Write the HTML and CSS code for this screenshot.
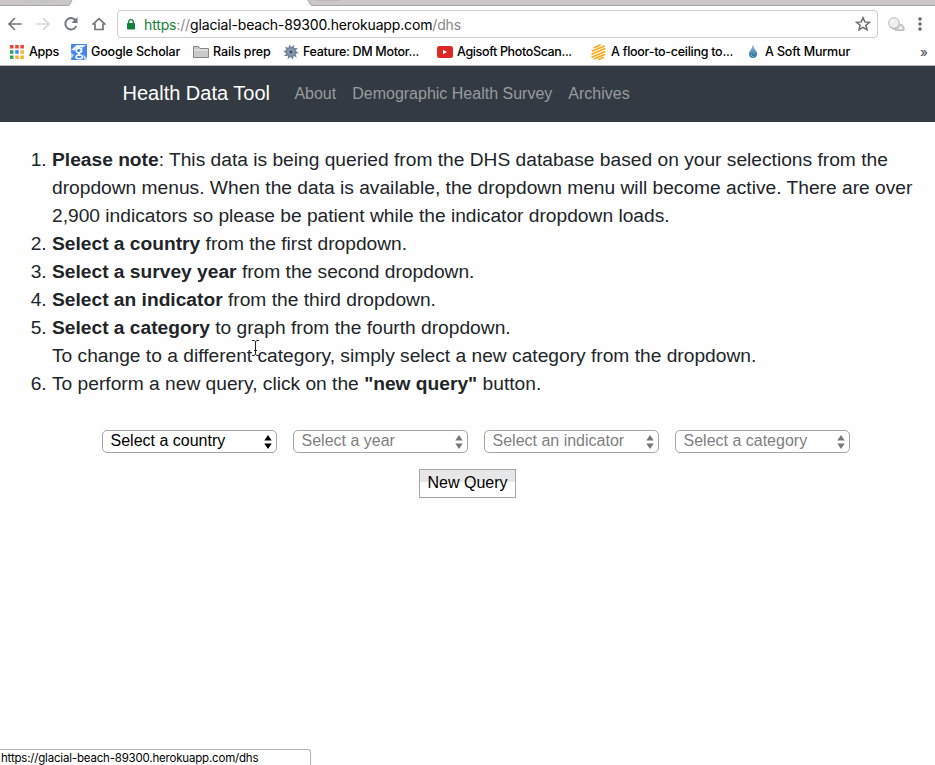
FILE: index.html
```html
<!DOCTYPE html>
<html lang="en">
<head>
<meta charset="utf-8">
<title>Health Data Tool</title>
<link rel="stylesheet" href="styles.css">
</head>
<body>
<header class="chrome">
  <svg class="tabs" width="935" height="6" viewBox="0 0 935 6">
    <path d="M0 0H72L70 4.500Q69.500 5.500 68 5.500H0Z" fill="#cbc7c8"/>
    <path d="M24 0h10v3H24zM40 0h10v3H40z" fill="#c4c4cb"/>
    <path d="M308 0H935V5.500H312Q310 5 308 0Z" fill="#cbc7c8"/>
    <path d="M315 0h25" stroke="#b9aaa5"/>
    <path d="M72 0L70 4Q69.500 5.500 68 5.500H0M308 0L310 4Q310.500 5.500 313 5.500H935" fill="none" stroke="#aaa6a7"/>
  </svg>
  <div class="toolbar">
    <svg class="controls" width="117" height="28" viewBox="0 0 117 28" fill="none" stroke-width="1.700">
      <path d="M21.500 14H9.500M15 8l-6 6 6 6" stroke="#73767b"/>
      <path d="M36.500 14H49M43 8l6 6-6 6" stroke="#d5d6d8"/>
      <path d="M75.500 10.200A5.700 5.700 0 1 0 76.300 16" stroke="#73767b" stroke-width="1.900"/>
      <path d="M77.500 7v6h-6z" fill="#73767b"/>
      <path d="M92.500 14.700L99 8.600l6.500 6.100M95 13.500v6h8v-6" stroke="#73767b" stroke-width="1.700"/>
    </svg>
    <div class="address">
      <svg width="10" height="13" viewBox="0 0 10 13"><path d="M1.500 5.500h7V11h-7z" fill="#12813a" stroke="#12813a" stroke-linejoin="round"/><path d="M2.700 6V4a2.300 2.300 0 0 1 4.600 0v2" fill="none" stroke="#12813a" stroke-width="1.300"/></svg>
      <span class="url"><span class="secure">https</span><span class="dim">://</span>glacial-beach-89300.herokuapp.com<span class="dim">/dhs</span></span>
      <svg class="star" width="16" height="16" viewBox="0 0 16 16"><path d="M8 1.700l1.800 4.200 4.600.4-3.500 3 1.100 4.500L8 11.400l-4 2.400 1.100-4.500-3.500-3 4.600-.4z" fill="none" stroke="#686b70" stroke-width="1.500"/></svg>
    </div>
    <svg class="extras" width="57" height="28" viewBox="0 0 57 28">
      <circle cx="16" cy="13" r="5.300" fill="#eee" stroke="#b9b9b9"/>
      <path d="M13 12a3 3 0 0 1 3-2" fill="none" stroke="#fff" stroke-width="1.500"/>
      <path d="M12 17q3 3 7 1l2-3 3-.5 2 3v3h-8z" fill="#d1d1d1" stroke="#b9b9b9"/>
      <circle cx="22.500" cy="18" r="1.500" fill="#f5f5f5"/>
      <g fill="#6a6d72"><circle cx="42" cy="9" r="1.800"/><circle cx="42" cy="14" r="1.800"/><circle cx="42" cy="19" r="1.800"/></g>
    </svg>
  </div>
  <nav class="bookmarks">
    <a><svg width="14" height="14" viewBox="0 0 14 14"><path d="M0 0h3.500v3.500H0zM5.200 0h3.500v3.500H5.200zM10.400 0h3.500v3.500h-3.500z" fill="#ed4437"/><path d="M0 5.200h3.500v3.500H0zM0 10.400h3.500v3.500H0z" fill="#2ca55b"/><path d="M5.200 5.200h3.500v3.500H5.200z" fill="#3389ee"/><path d="M10.400 5.200h3.500v3.500h-3.500zM5.200 10.400h3.500v3.500H5.200zM10.400 10.400h3.500v3.500h-3.500z" fill="#f5b52a"/></svg><span class="t1">Apps</span></a>
    <a><svg width="16" height="16" viewBox="0 0 16 16"><rect width="16" height="16" rx="1" fill="#4384ef"/><path d="M0 6L5.500 1H15l-3 2.500H9L4 6.500z" fill="#e9f1ff"/><path d="M9 4.300c-4-1.300-5 4.500-1.700 4.500 3.700 0 3.700-4.500 1.700-4.500M10.500 4v4.500M8 9c-1.500 2 3.500 1.200 3.500 3.700 0 2.800-6.500 2.500-6.500.3 0-2 2.500-2 4-2" fill="none" stroke="#fff" stroke-width="1.600"/><path d="M0 8.500l3 2.500-2 3H0zM12.500 10.500L16 14v2h-3z" fill="#bcd2f8"/></svg><span class="t2">Google Scholar</span></a>
    <a><svg width="16" height="14" viewBox="0 0 16 14"><path d="M.5 12.500v-11h5l1.500 2h8.500v9z" fill="#c9c9c9" stroke="#868686"/><path d="M1 5h14" stroke="#eee"/></svg><span class="t3">Rails prep</span></a>
    <a><svg width="16" height="16" viewBox="0 0 16 16"><defs><path id="blade" d="M8 8Q3.500 4.500 7 0q-.5 3 4 4z"/></defs><g fill="#71839a"><use href="#blade"/><use href="#blade" transform="rotate(36 8 8)"/><use href="#blade" transform="rotate(72 8 8)"/><use href="#blade" transform="rotate(108 8 8)"/><use href="#blade" transform="rotate(144 8 8)"/><use href="#blade" transform="rotate(180 8 8)"/><use href="#blade" transform="rotate(216 8 8)"/><use href="#blade" transform="rotate(252 8 8)"/><use href="#blade" transform="rotate(288 8 8)"/><use href="#blade" transform="rotate(324 8 8)"/></g><circle cx="8" cy="8" r="3.700" fill="#91a1b4"/><path d="M8 4v8M4 8h8M5 5l6 6M5 11l6-6" stroke="#70859c" stroke-width=".8"/><circle cx="8" cy="8" r="1.300" fill="#34465d"/></svg><span class="t4">Feature: DM Motor...</span></a>
    <a><svg width="16" height="12" viewBox="0 0 16 12"><rect width="16" height="12" rx="2.500" fill="#dc2926"/><path d="M6 3.700v4.600l4-2.300z" fill="#fff"/></svg><span class="t5">Agisoft PhotoScan...</span></a>
    <a><svg width="15" height="16" viewBox="0 0 15 16"><g stroke="#f7a91b" stroke-width="1.700" stroke-linecap="round"><path d="M3.500 3.500L9 1M1.500 7L13 2.200M1.200 10L13.700 4.700M1.200 13L13.700 7.700M3.500 14.800l10-4.300M8 15.300l4-1.800"/></g></svg><span class="t6">A floor-to-ceiling to...</span></a>
    <a><svg width="10" height="15" viewBox="0 0 10 15"><defs><linearGradient id="drop" x2="0" y2="1"><stop stop-color="#97c5dc"/><stop offset="1" stop-color="#246d99"/></linearGradient></defs><path d="M5 .5Q5.500 4 8.700 8c2.500 8-9.900 8-7.400 0Q4.500 4 5 .5z" fill="url(#drop)"/><path d="M3 11q1 2 3 2" fill="none" stroke="#8acbe5"/></svg><span class="t7">A Soft Murmur</span></a>
    <span class="more">»</span>
  </nav>
</header>
<nav class="navbar"><a class="brand">Health Data Tool</a><a>About</a><a>Demographic Health Survey</a><a>Archives</a></nav>
<main>
  <ol class="steps">
    <li><b>Please note</b>: This data is being queried from the DHS database based on your selections from the<br>dropdown menus. When the data is available, the dropdown menu will become active. There are over<br>2,900 indicators so please be patient while the indicator dropdown loads.</li>
    <li><b>Select a country</b> from the first dropdown.</li>
    <li><b>Select a survey year</b> from the second dropdown.</li>
    <li><b>Select an indicator</b> from the third dropdown.</li>
    <li><b>Select a category</b> to graph from the fourth dropdown.<br>To change to a different category, simply select a new category from the dropdown.</li>
    <li>To perform a new query, click on the <b>"new query"</b> button.</li>
  </ol>
  <div class="filters">
    <div class="select active">Select a country<svg width="8" height="14" viewBox="0 0 8 14"><path d="M4 0l3.700 5.500H.3zM.3 8.500h7.400L4 14z"/></svg></div>
    <div class="select">Select a year<svg width="8" height="14" viewBox="0 0 8 14"><path d="M4 0l3.700 5.500H.3zM.3 8.500h7.400L4 14z"/></svg></div>
    <div class="select">Select an indicator<svg width="8" height="14" viewBox="0 0 8 14"><path d="M4 0l3.700 5.500H.3zM.3 8.500h7.400L4 14z"/></svg></div>
    <div class="select">Select a category<svg width="8" height="14" viewBox="0 0 8 14"><path d="M4 0l3.700 5.500H.3zM.3 8.500h7.400L4 14z"/></svg></div>
  </div>
  <button class="query">New Query</button>
</main>
<svg class="cursor" width="9" height="16" viewBox="0 0 9 16"><path d="M1 .5h2l1.500 1L6 .5h2M4.500 1.500v13M1 15.500h2l1.500-1 1.500 1h2M3 10.500h3" fill="none" stroke="#fff" stroke-width="2"/><path d="M1 .5h2l1.500 1L6 .5h2M4.500 1.500v13M1 15.500h2l1.500-1 1.500 1h2M3 10.500h3" fill="none" stroke="#222"/></svg>
<div class="status">https://glacial-beach-89300.herokuapp.com/dhs</div>
</body>
</html>
```
FILE: styles.css
```css
* { box-sizing: border-box; }
body { margin: 0; height: 765px; overflow: hidden; background: #fefefe; color: #212529; font-family: "Liberation Sans", Arial, sans-serif; }
svg { flex: none; display: block; }
.chrome { height: 66px; border-bottom: 1px solid #b7b8ba; font-family: Inter, sans-serif; color: #000; }
.toolbar { display: flex; height: 28px; margin-top: 4px; }
.address { display: flex; align-items: center; width: 761px; height: 28px; padding: 0 6px 0 8px; border: 1px solid #ccc; border-radius: 4px; }
.url { margin-left: 8px; font-size: 14px; letter-spacing: -.15px; white-space: nowrap; }
.secure { color: #12813a; }
.dim { color: #888; }
.star { margin-left: auto; }
.bookmarks { display: grid; grid-template-columns: 61px 122px 90px 154px 154px 157px 172px 1fr; align-items: center; height: 27px; padding-left: 10px; font-size: 12.500px; font-weight: 500; }
.bookmarks a { display: flex; align-items: center; gap: 4px; min-width: 0; white-space: nowrap; }
.bookmarks .t1 { margin-left: 1px; letter-spacing: -.3px; }
.t2 { letter-spacing: -.16px; }
.t3 { letter-spacing: -.12px; }
.t4 { letter-spacing: -.31px; }
.t5 { letter-spacing: -.36px; }
.t6 { margin-left: 1px; letter-spacing: -.27px; }
.t7 { margin-left: 3px; letter-spacing: -.15px; }
.more { font-size: 13px; color: #555; }
.navbar { display: flex; align-items: center; height: 56px; padding: 0 0 1px 122.500px; background: #333a41; color: #999c9f; font-size: 16px; }
.navbar a { margin-right: 16px; }
.navbar .brand { margin-right: 24.400px; font-size: 20px; color: #fff; }
.steps { margin: 24px 0 0; padding-left: 52px; font-size: 19.210px; line-height: 28px; white-space: nowrap; }
.filters { display: flex; gap: 16px; margin: 32px 0 0 102px; }
.select { display: flex; align-items: center; justify-content: space-between; width: 175px; height: 23px; padding: 0 4px 2px 7.500px; border: 1px solid #a6a6a6; border-radius: 5px; background: #fff; color: #7f7f7f; font-size: 16px; fill: #777; }
.select svg { position: relative; top: 1px; }
.select.active { color: #000; fill: #000; }
.query { display: block; width: 97px; height: 29px; margin: 16px 0 0 419px; padding: 0 0 2px; border: 1px solid #a6a6a6; background: linear-gradient(#e7e7e7 0 12px, #fff 12px); color: #000; font: 16px "Liberation Sans", Arial, sans-serif; }
.cursor { position: absolute; left: 251px; top: 340px; }
.status { position: fixed; bottom: 0; left: 0; width: 311px; height: 16px; padding-left: 1px; border: solid #b5b5b5; border-width: 1px 1px 0 0; border-radius: 0 3px 0 0; background: #fff; color: #000; font: 11.500px/17px Inter, sans-serif; letter-spacing: -.19px; }
```
